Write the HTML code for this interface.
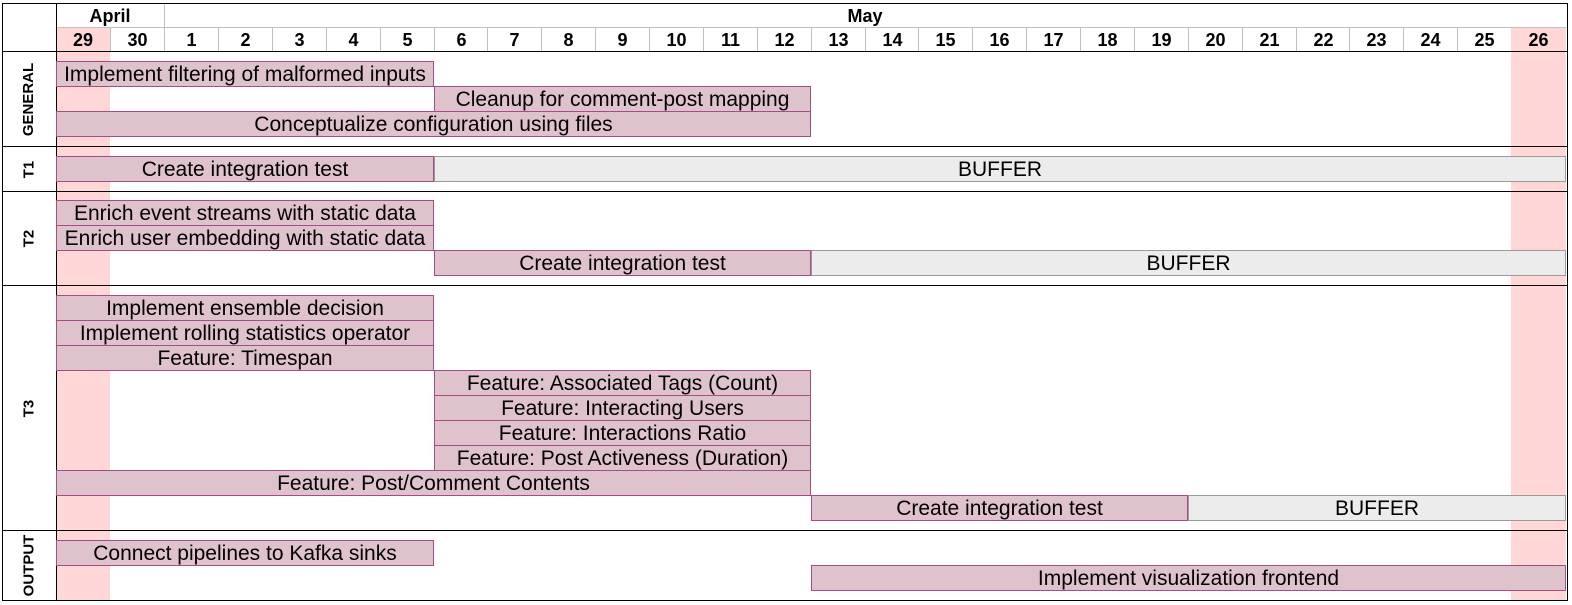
<!DOCTYPE html>
<html><head><meta charset="utf-8"><style>
*{margin:0;padding:0;box-sizing:border-box}
body{width:1572px;height:605px;background:#fff;position:relative;overflow:hidden;font-family:"Liberation Sans",sans-serif;color:#000}
div{position:absolute}
.pk{background:#ffd7d7}
.hl{border-left:1px solid #c0c0c0}
.hd{font-weight:bold;font-size:18px;text-align:center;line-height:26px;height:24px}
.b{background:#dfc3cc;border:1px solid #a64d85;height:26px;font-size:21px;line-height:26px;text-align:center;white-space:nowrap;overflow:hidden}
.bf{background:#ececec;border:1px solid #9a9a9a;height:26px;font-size:21px;line-height:26px;text-align:center}
.sl{left:2px;width:1565px;height:0;border-top:1.5px solid #000}
.lab{left:2px;width:54px;display:flex;align-items:center;justify-content:center}
.lab span{transform:rotate(-90deg);font-weight:bold;font-size:15px;white-space:nowrap;display:block}
</style></head><body>
<div class="pk" style="left:56px;top:27px;width:54px;height:573px"></div>
<div class="pk" style="left:1511px;top:27px;width:55px;height:573px"></div>
<div class="hd" style="left:56px;top:3px;width:108px">April</div>
<div class="hd" style="left:164px;top:3px;width:1402px">May</div>
<div style="left:164px;top:3px;height:24px;border-left:1px solid #c0c0c0"></div>
<div style="left:56px;top:27px;width:1510px;border-top:1px solid #c0c0c0"></div>
<div class="hd" style="left:56px;top:27px;width:54px">29</div>
<div class="hd hl" style="left:110px;top:27px;width:54px">30</div>
<div class="hd hl" style="left:164px;top:27px;width:54px">1</div>
<div class="hd hl" style="left:218px;top:27px;width:54px">2</div>
<div class="hd hl" style="left:272px;top:27px;width:54px">3</div>
<div class="hd hl" style="left:326px;top:27px;width:54px">4</div>
<div class="hd hl" style="left:380px;top:27px;width:54px">5</div>
<div class="hd hl" style="left:434px;top:27px;width:54px">6</div>
<div class="hd hl" style="left:487px;top:27px;width:54px">7</div>
<div class="hd hl" style="left:541px;top:27px;width:54px">8</div>
<div class="hd hl" style="left:595px;top:27px;width:54px">9</div>
<div class="hd hl" style="left:649px;top:27px;width:54px">10</div>
<div class="hd hl" style="left:703px;top:27px;width:54px">11</div>
<div class="hd hl" style="left:757px;top:27px;width:54px">12</div>
<div class="hd hl" style="left:811px;top:27px;width:54px">13</div>
<div class="hd hl" style="left:865px;top:27px;width:54px">14</div>
<div class="hd hl" style="left:918px;top:27px;width:54px">15</div>
<div class="hd hl" style="left:972px;top:27px;width:54px">16</div>
<div class="hd hl" style="left:1026px;top:27px;width:54px">17</div>
<div class="hd hl" style="left:1080px;top:27px;width:54px">18</div>
<div class="hd hl" style="left:1134px;top:27px;width:54px">19</div>
<div class="hd hl" style="left:1188px;top:27px;width:54px">20</div>
<div class="hd hl" style="left:1242px;top:27px;width:54px">21</div>
<div class="hd hl" style="left:1296px;top:27px;width:54px">22</div>
<div class="hd hl" style="left:1349px;top:27px;width:54px">23</div>
<div class="hd hl" style="left:1403px;top:27px;width:54px">24</div>
<div class="hd hl" style="left:1457px;top:27px;width:54px">25</div>
<div class="hd" style="left:1511px;top:27px;width:55px">26</div>
<div style="left:2px;top:3px;width:1566px;height:598px;border:1.5px solid #000"></div>
<div style="left:56px;top:3px;height:598px;border-left:1.5px solid #000"></div>
<div class="sl" style="top:51px"></div>
<div class="sl" style="top:146px"></div>
<div class="sl" style="top:191px"></div>
<div class="sl" style="top:285px"></div>
<div class="sl" style="top:530px"></div>
<div class="lab" style="top:52px;height:94px"><span>GENERAL</span></div>
<div class="lab" style="top:147px;height:44px"><span>T1</span></div>
<div class="lab" style="top:192px;height:93px"><span>T2</span></div>
<div class="lab" style="top:286px;height:244px"><span>T3</span></div>
<div class="lab" style="top:531px;height:69px"><span>OUTPUT</span></div>
<div class="b" style="left:56px;top:61px;width:378px">Implement filtering of malformed inputs</div>
<div class="b" style="left:434px;top:86px;width:377px">Cleanup for comment-post mapping</div>
<div class="b" style="left:56px;top:111px;width:755px">Conceptualize configuration using files</div>
<div class="b" style="left:56px;top:156px;width:378px">Create integration test</div>
<div class="bf" style="left:434px;top:156px;width:1132px">BUFFER</div>
<div class="b" style="left:56px;top:200px;width:378px">Enrich event streams with static data</div>
<div class="b" style="left:56px;top:225px;width:378px">Enrich user embedding with static data</div>
<div class="b" style="left:434px;top:250px;width:377px">Create integration test</div>
<div class="bf" style="left:811px;top:250px;width:755px">BUFFER</div>
<div class="b" style="left:56px;top:295px;width:378px">Implement ensemble decision</div>
<div class="b" style="left:56px;top:320px;width:378px">Implement rolling statistics operator</div>
<div class="b" style="left:56px;top:345px;width:378px">Feature: Timespan</div>
<div class="b" style="left:434px;top:370px;width:377px">Feature: Associated Tags (Count)</div>
<div class="b" style="left:434px;top:395px;width:377px">Feature: Interacting Users</div>
<div class="b" style="left:434px;top:420px;width:377px">Feature: Interactions Ratio</div>
<div class="b" style="left:434px;top:445px;width:377px">Feature: Post Activeness (Duration)</div>
<div class="b" style="left:56px;top:470px;width:755px">Feature: Post/Comment Contents</div>
<div class="b" style="left:811px;top:495px;width:377px">Create integration test</div>
<div class="bf" style="left:1188px;top:495px;width:378px">BUFFER</div>
<div class="b" style="left:56px;top:540px;width:378px">Connect pipelines to Kafka sinks</div>
<div class="b" style="left:811px;top:565px;width:755px">Implement visualization frontend</div>
</body></html>
